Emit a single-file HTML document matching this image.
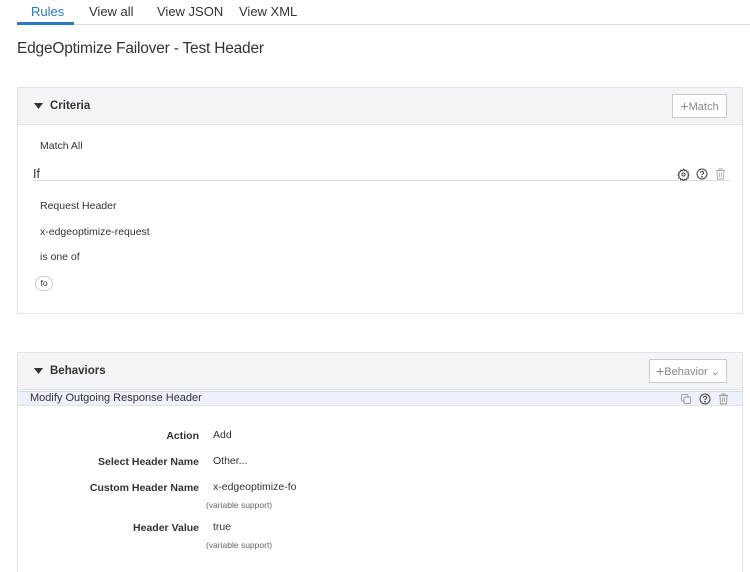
<!DOCTYPE html>
<html><head><meta charset="utf-8"><style>
*{margin:0;padding:0;box-sizing:border-box}
body{width:750px;height:572px;overflow:hidden;background:#fff;font-family:"Liberation Sans",sans-serif;color:#333;position:relative}
.a{position:absolute;white-space:nowrap}
.t{font-size:12.5px;color:#333}
.lab{font-size:10.5px;font-weight:bold;color:#333;text-align:right;width:180px}
.small{font-size:8.5px;color:#666}
svg{position:absolute}
</style></head><body>
<div class="a" style="left:31px;top:4px;font-size:13px;color:#2a7ac0">Rules</div>
<div class="a" style="left:89px;top:4px;font-size:13px">View all</div>
<div class="a" style="left:157px;top:4px;font-size:13px">View JSON</div>
<div class="a" style="left:239px;top:4px;font-size:13px">View XML</div>
<div class="a" style="left:17px;top:24px;width:733px;height:1px;background:#ddd"></div>
<div class="a" style="left:17px;top:22px;width:57px;height:3px;background:#2a7ac0"></div>
<div class="a" style="left:17px;top:40px;font-size:15.5px;color:#333;letter-spacing:-0.2px">EdgeOptimize Failover - Test Header</div>

<div class="a" style="left:17px;top:87px;width:726px;height:227px;border:1px solid #e2e2e6"></div>
<div class="a" style="left:18px;top:88px;width:724px;height:37px;background:#f4f4f6;border-bottom:1px solid #e2e2e6"></div>
<svg style="left:34px;top:102px" width="10" height="8"><path d="M0 1H9L4.5 7Z" fill="#333"/></svg>
<div class="a" style="left:50px;top:100px;font-size:11.5px;font-weight:bold">Criteria</div>
<div class="a" style="left:672px;top:94px;width:55px;height:24px;border:1px solid #ccc;background:#fff;font-size:11px;color:#888;line-height:22px;text-align:center"><span style="font-size:14px;vertical-align:-1px">+</span>Match</div>
<div class="a t" style="left:40px;top:140px;font-size:10.5px">Match All</div>
<div class="a" style="left:33px;top:167px;font-size:12.5px">If</div>
<div class="a" style="left:33px;top:180px;width:697px;height:1px;background:#ddd"></div>
<svg style="left:677px;top:168px" width="13" height="13" viewBox="0 0 24 24" fill="none" stroke="#444" stroke-width="2"><circle cx="12" cy="12" r="3"/><path d="M12 2l2 3 3-1 1 3 3 1-1 3 2 2-2 2 1 3-3 1-1 3-3-1-2 2-2-2-3 1-1-3-3-1 1-3-2-2 2-2-1-3 3-1 1-3 3 1z"/></svg>
<svg style="left:696px;top:168px" width="12" height="12" viewBox="0 0 24 24" fill="none" stroke="#444" stroke-width="2"><circle cx="12" cy="12" r="10"/><path d="M9 9.5a3 3 0 1 1 4 2.8c-1 .4-1 1-1 2" /><circle cx="12" cy="17.5" r=".8" fill="#444"/></svg>
<svg style="left:715px;top:168px" width="11" height="12" viewBox="0 0 22 24" fill="none" stroke="#aaa" stroke-width="1.8"><path d="M2 5h18M8 5V2h6v3M4 5l1 17h12l1-17M9 9v9M13 9v9"/></svg>
<div class="a t" style="left:40px;top:200px;font-size:10.5px">Request Header</div>
<div class="a t" style="left:40px;top:226px;font-size:10.5px">x-edgeoptimize-request</div>
<div class="a t" style="left:40px;top:251px;font-size:10.5px">is one of</div>
<div class="a" style="left:35px;top:276px;width:18px;height:15px;border:1px solid #ccc;border-radius:8px;font-size:8.5px;text-align:center;line-height:13px">fo</div>

<div class="a" style="left:17px;top:352px;width:726px;height:220px;border:1px solid #e2e2e6;border-bottom:none"></div>
<div class="a" style="left:18px;top:353px;width:724px;height:37px;background:#f4f4f6;border-bottom:1px solid #e2e2e6"></div>
<svg style="left:34px;top:367px" width="10" height="8"><path d="M0 1H9L4.5 7Z" fill="#333"/></svg>
<div class="a" style="left:50px;top:365px;font-size:11.5px;font-weight:bold">Behaviors</div>
<div class="a" style="left:649px;top:359px;width:78px;height:24px;border:1px solid #ccc;background:#fff;font-size:11px;color:#888;line-height:22px;text-align:center"><span style="font-size:14px;vertical-align:-1px">+</span>Behavior &#8964;</div>
<div class="a" style="left:18px;top:391px;width:724px;height:15px;background:#eef1fb;border-top:1px solid #cfd8ee;border-bottom:1px solid #dde3f2"></div>
<div class="a" style="left:30px;top:392px;font-size:11px;color:#333">Modify Outgoing Response Header</div>
<svg style="left:680px;top:393px" width="12" height="12" viewBox="0 0 24 24" fill="none" stroke="#999" stroke-width="1.8"><rect x="8" y="8" width="13" height="13" rx="2"/><path d="M16 8V5a2 2 0 0 0-2-2H5a2 2 0 0 0-2 2v9a2 2 0 0 0 2 2h3"/></svg>
<svg style="left:699px;top:393px" width="12" height="12" viewBox="0 0 24 24" fill="none" stroke="#444" stroke-width="2"><circle cx="12" cy="12" r="10"/><path d="M9 9.5a3 3 0 1 1 4 2.8c-1 .4-1 1-1 2"/><circle cx="12" cy="17.5" r=".8" fill="#444"/></svg>
<svg style="left:718px;top:393px" width="11" height="12" viewBox="0 0 22 24" fill="none" stroke="#999" stroke-width="1.8"><path d="M2 5h18M8 5V2h6v3M4 5l1 17h12l1-17M9 9v9M13 9v9"/></svg>

<div class="a lab" style="left:19px;top:430px">Action</div>
<div class="a t" style="left:213px;top:429px;font-size:10.5px">Add</div>
<div class="a lab" style="left:19px;top:456px">Select Header Name</div>
<div class="a t" style="left:213px;top:455px;font-size:10.5px">Other...</div>
<div class="a lab" style="left:19px;top:482px">Custom Header Name</div>
<div class="a t" style="left:213px;top:481px;font-size:10.5px">x-edgeoptimize-fo</div>
<div class="a small" style="left:206px;top:500px">(variable support)</div>
<div class="a lab" style="left:19px;top:522px">Header Value</div>
<div class="a t" style="left:213px;top:521px;font-size:10.5px">true</div>
<div class="a small" style="left:206px;top:540px">(variable support)</div>
</body></html>
